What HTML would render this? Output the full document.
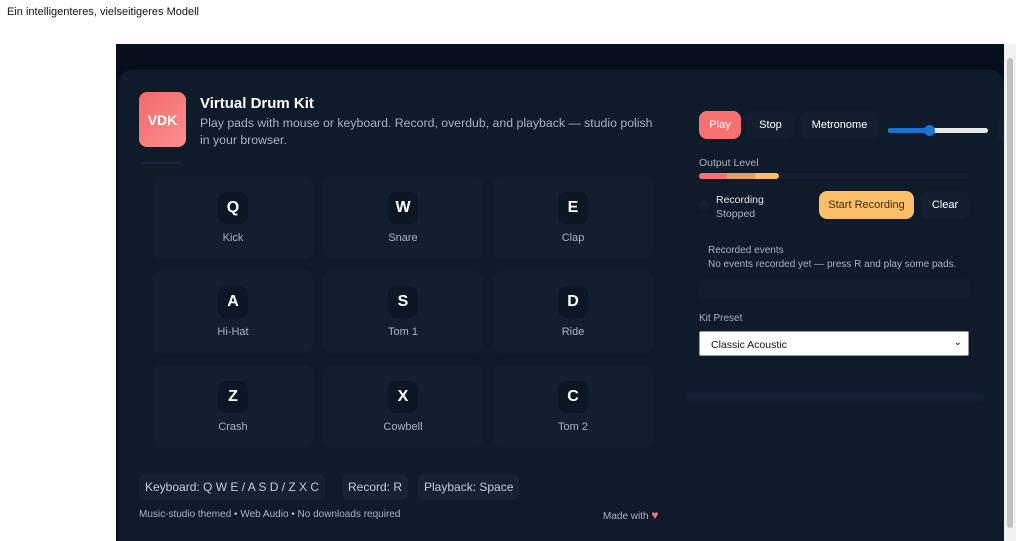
<!DOCTYPE html>
<html><head><meta charset="utf-8"><style>
*{box-sizing:border-box;margin:0;padding:0}
body{width:1024px;height:541px;background:#fff;font-family:"Liberation Sans",sans-serif;position:relative;overflow:hidden}
.cap{position:absolute;left:7px;top:6px;font-size:11px;color:#111}
.frame{position:absolute;left:116px;top:44px;width:888px;height:497px;background:#070e1c}
.sb{position:absolute;left:1004px;top:44px;width:12px;height:497px;background:#f1f1f1}
.sb i{position:absolute;left:3px;top:14px;width:6px;height:470px;background:#c1c1c1;border-radius:3px}
.card{position:absolute;left:118px;top:70px;width:886px;height:471px;background:#0f1a2a;border-radius:14px 14px 0 0}
.a{position:absolute}
.logo{left:139px;top:92px;width:47px;height:55px;border-radius:8px;background:linear-gradient(135deg,#f26a6a,#fb8f8f);color:#fff;font-weight:bold;font-size:14px;display:flex;align-items:center;justify-content:center}
.t{left:200px;top:95px;color:#fff;font-weight:bold;font-size:15px}
.s{left:200px;top:115px;color:#a8b3c2;font-size:12.3px;line-height:17px;width:465px}
.pad{width:160px;height:83px;background:#131f30;border-radius:9px}
.k{position:absolute;left:65px;top:16px;width:30px;height:32px;background:#0d1624;border-radius:8px;color:#fff;font-weight:bold;font-size:16px;display:flex;align-items:center;justify-content:center}
.l{position:absolute;left:0;right:0;top:56px;text-align:center;color:#a8b3c2;font-size:11px}
.btn{height:28px;border-radius:8px;font-size:11px;color:#fff;display:flex;align-items:center;justify-content:center;background:#131f30}
.chip{top:474px;height:26px;border-radius:6px;background:#162234;color:#c3ccd8;font-size:12px;display:flex;align-items:center;padding:0 6px}
.g{color:#a8b3c2;font-size:10px;line-height:12px}
</style></head><body>
<div class="cap">Ein intelligenteres, vielseitigeres Modell</div>
<div class="frame"></div><div class="sb"><i></i></div>
<div class="card"></div>
<div class="a logo">VDK</div>
<div class="a t">Virtual Drum Kit</div>
<div class="a s">Play pads with mouse or keyboard. Record, overdub, and playback — studio polish in your browser.</div>
<div class="a" style="left:142px;top:162px;width:40px;height:2px;background:#16233a"></div>

<div class="a pad" style="left:153px;top:176px"><div class="k">Q</div><div class="l">Kick</div></div>
<div class="a pad" style="left:323px;top:176px"><div class="k">W</div><div class="l">Snare</div></div>
<div class="a pad" style="left:493px;top:176px"><div class="k">E</div><div class="l">Clap</div></div>
<div class="a pad" style="left:153px;top:270px"><div class="k">A</div><div class="l">Hi-Hat</div></div>
<div class="a pad" style="left:323px;top:270px"><div class="k">S</div><div class="l">Tom 1</div></div>
<div class="a pad" style="left:493px;top:270px"><div class="k">D</div><div class="l">Ride</div></div>
<div class="a pad" style="left:153px;top:365px"><div class="k">Z</div><div class="l">Crash</div></div>
<div class="a pad" style="left:323px;top:365px"><div class="k">X</div><div class="l">Cowbell</div></div>
<div class="a pad" style="left:493px;top:365px"><div class="k">C</div><div class="l">Tom 2</div></div>

<div class="a chip" style="left:139px">Keyboard: Q W E / A S D / Z X C</div>
<div class="a chip" style="left:342px">Record: R</div>
<div class="a chip" style="left:418px">Playback: Space</div>
<div class="a g" style="left:139px;top:509px">Music-studio themed • Web Audio • No downloads required</div>
<div class="a g" style="left:603px;top:509px">Made with <span style="color:#f87171;font-size:12px;line-height:12px">♥</span></div>

<div class="a btn" style="left:699px;top:111px;width:42px;background:#f87171">Play</div>
<div class="a btn" style="left:747px;top:111px;width:47px">Stop</div>
<div class="a btn" style="left:801px;top:111px;width:77px">Metronome</div>
<div class="a" style="left:888px;top:128px;width:100px;height:5px;border-radius:3px;background:#e8e8e8"></div>
<div class="a" style="left:888px;top:128px;width:42px;height:5px;border-radius:3px;background:#1a73d0"></div>
<div class="a" style="left:924px;top:125px;width:11px;height:11px;border-radius:50%;background:#1a73d0"></div>
<div class="a" style="left:997px;top:119px;width:7px;height:22px;background:#131f30;border-radius:4px 0 0 4px"></div>
<div class="a g" style="left:699px;top:157px;font-size:10.5px">Output Level</div>
<div class="a" style="left:699px;top:173px;width:270px;height:6px;border-radius:3px;background:#142033"></div>
<div class="a" style="left:699px;top:173px;width:80px;height:6px;border-radius:3px;background:linear-gradient(90deg,#f87171 0,#f87171 35%,#e8a060 35%,#e8a060 70%,#fbbf6a 70%)"></div>
<div class="a" style="left:699px;top:200px;width:10px;height:10px;border-radius:50%;background:#142033"></div>
<div class="a" style="left:716px;top:194px;color:#e5e9ef;font-size:10.5px">Recording</div>
<div class="a g" style="left:716px;top:208px;font-size:10.5px">Stopped</div>
<div class="a btn" style="left:819px;top:191px;width:95px;background:#fbbf6a;color:#3a2a10">Start Recording</div>
<div class="a btn" style="left:921px;top:191px;width:48px">Clear</div>
<div class="a g" style="left:708px;top:245px">Recorded events</div>
<div class="a g" style="left:708px;top:259px">No events recorded yet — press R and play some pads.</div>
<div class="a" style="left:699px;top:279px;width:270px;height:20px;border-radius:6px;background:#131f30"></div>
<div class="a g" style="left:699px;top:313px">Kit Preset</div>
<div class="a" style="left:699px;top:331px;width:270px;height:25px;background:#fff;border:1px solid #999;border-radius:2px;font-size:10.5px;color:#111;padding:7px 11px">Classic Acoustic<span style="position:absolute;right:6px;top:5px;font-size:10px">&#8964;</span></div>
<div class="a" style="left:686px;top:393px;width:297px;height:8px;background:#122033"></div>
</body></html>
